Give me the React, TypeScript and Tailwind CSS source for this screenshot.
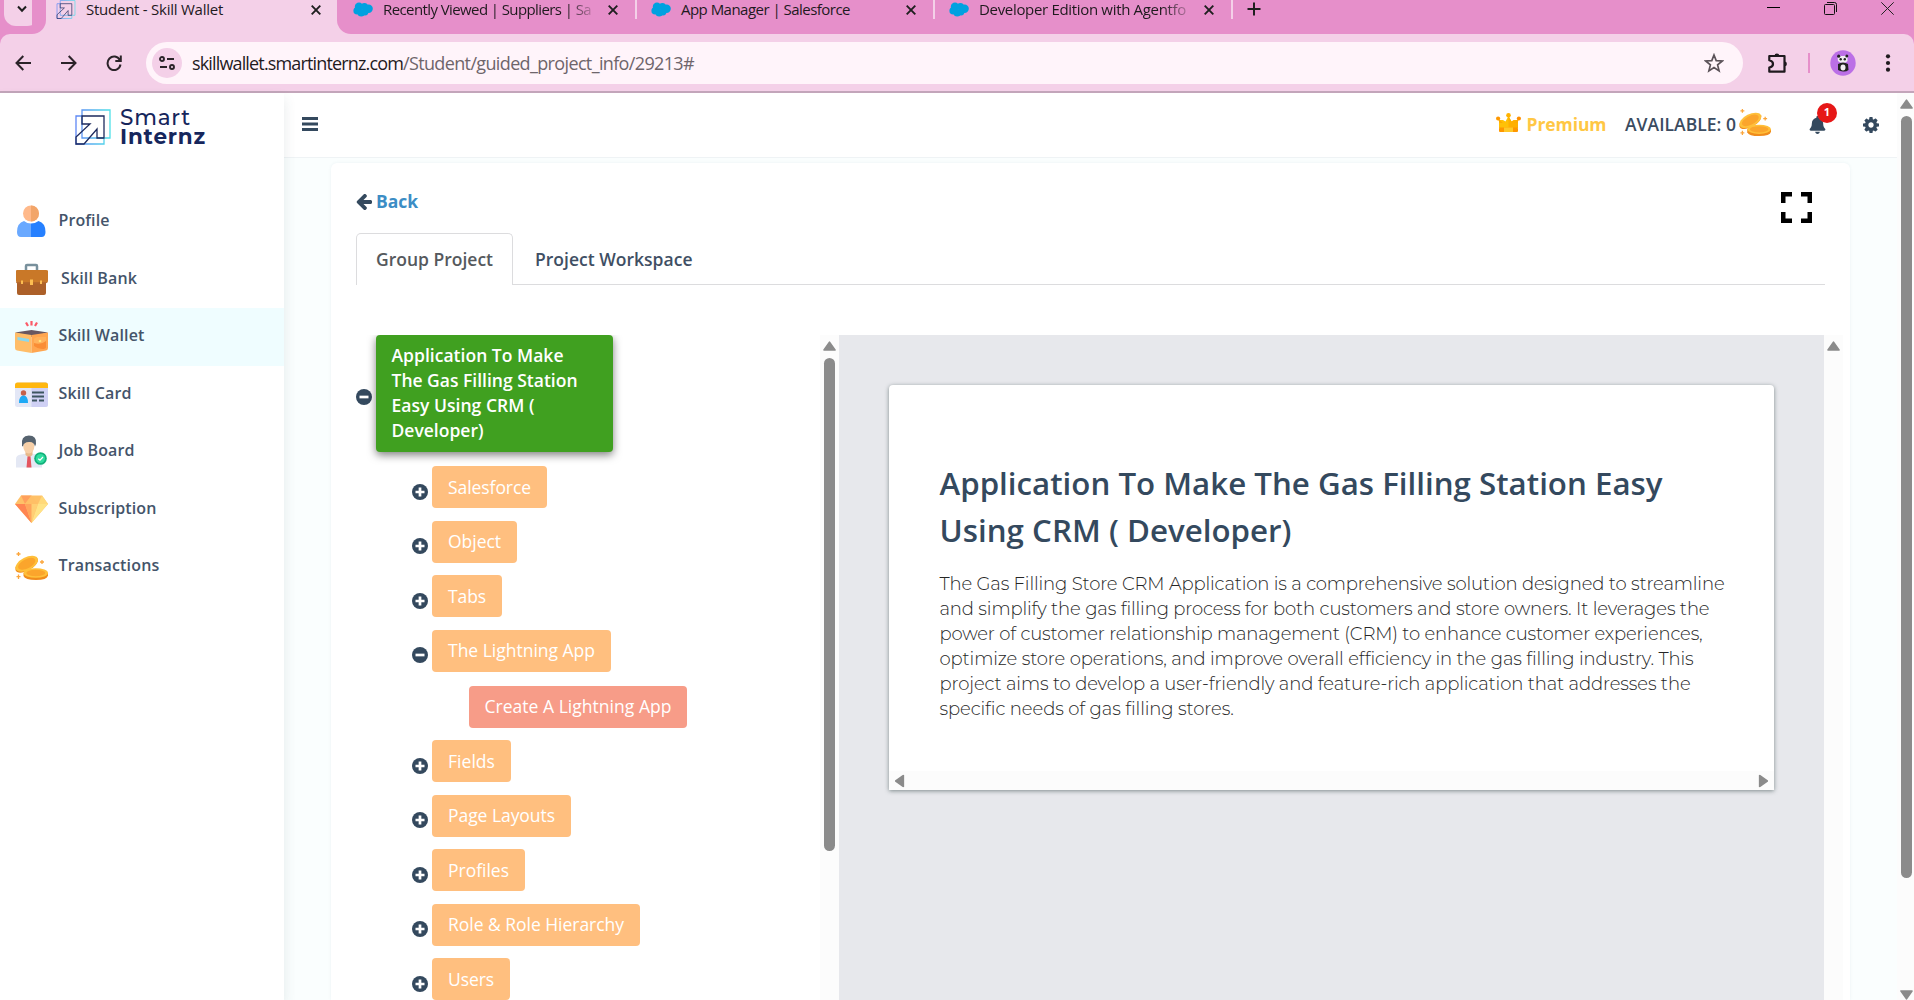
import React, { useLayoutEffect, useRef, useState } from "react";
import { FaBell } from "react-icons/fa";

/** One line of text whose tracking is adjusted so that it spans `width` pixels. */
function FitLine({ width, className = "", children }: { width: number; className?: string; children: string }) {
  const ref = useRef<HTMLSpanElement>(null);
  const [spacing, setSpacing] = useState(0);
  useLayoutEffect(() => {
    if (ref.current) {
      const natural = ref.current.getBoundingClientRect().width;
      setSpacing((width - natural) / children.length);
    }
  }, [width, children]);
  return (
    <span ref={ref} className={`inline-block whitespace-nowrap ${className}`} style={{ letterSpacing: spacing }}>
      {children}
    </span>
  );
}

/* ---------- browser chrome ---------- */

function BrandMark({ className }: { className: string }) {
  return (
    <svg viewBox="0 0 36 36" className={className} fill="none">
      <defs>
        <linearGradient id="brand" x1="0" y1="0" x2="1" y2="0">
          <stop offset="0" stopColor="#5f86f5" />
          <stop offset="1" stopColor="#4fe0e8" />
        </linearGradient>
      </defs>
      <path d="M7 24V1H35V29H30M7 7H1V35H29V29H7V24" stroke="url(#brand)" strokeWidth="1.3" />
      <path d="M7 7H29V29H22V20L9 35H1V28L15 15H7Z" stroke="#1d2a5e" strokeWidth="1.3" />
    </svg>
  );
}

function Cloud() {
  return (
    <svg viewBox="0 0 20 15" className="h-[15px] w-5 shrink-0" fill="#00a1e0">
      <circle cx="6" cy="4.8" r="4.2" />
      <circle cx="11.4" cy="4.6" r="3.6" />
      <circle cx="15.6" cy="6.7" r="4.2" />
      <circle cx="4.2" cy="8.8" r="3.8" />
      <circle cx="8.2" cy="11" r="3.6" />
      <circle cx="12" cy="10" r="3.4" />
    </svg>
  );
}

function Cross() {
  return (
    <svg viewBox="0 0 10 10" className="h-[10px] w-[10px] shrink-0" stroke="#1f1f1f" strokeWidth="1.9">
      <path d="M.7.7 9.3 9.3M9.3.7.7 9.3" />
    </svg>
  );
}

function SalesforceTab({ title, textWidth, fade }: { title: string; textWidth: number; fade: boolean }) {
  return (
    <div className="flex h-[19px] w-[284px] shrink-0 items-center">
      <Cloud />
      <div
        className={`ml-[10px] w-[209px] leading-[19px] ${
          fade ? "[mask-image:linear-gradient(to_right,black_88%,rgba(0,0,0,0.2))]" : ""
        }`}
      >
        <FitLine width={textWidth}>{title}</FitLine>
      </div>
      <div className="ml-[16px] flex">
        <Cross />
      </div>
      <div className="ml-auto h-[19px] w-[2px] bg-[#f4d0e8]" />
    </div>
  );
}

function TabStrip() {
  return (
    <div className="flex h-[34px] bg-[#e68fca] font-['Open_Sans',sans-serif] text-[15px] text-[#1f1a1e]">
      <div className="h-full w-[46px] shrink-0 rounded-br-[14px] bg-[#e68fca]">
        <div className="ml-1 flex h-[26px] w-[35px] items-center justify-center rounded-b-[12px] bg-[#f4d0e8] pb-2">
          <svg viewBox="0 0 10 8" className="h-2 w-[10px]" fill="none" stroke="#1f1f1f" strokeWidth="2">
            <path d="M1 1.5 5 5.7 9 1.5" />
          </svg>
        </div>
      </div>
      <div className="-ml-[14px] w-[319px] shrink-0 bg-[#f4d0e8]">
        <div className="flex h-full">
          <div className="h-full w-[14px] rounded-br-[14px] bg-[#e68fca]" />
          <div className="flex h-[19px] flex-1 items-center pl-[10px]">
            <BrandMark className="h-[19px] w-5" />
            <FitLine width={137} className="ml-[10px] leading-[19px]">
              Student - Skill Wallet
            </FitLine>
            <div className="ml-[88px] flex">
              <Cross />
            </div>
          </div>
          <div className="h-full w-[14px] rounded-bl-[14px] bg-[#e68fca]" />
        </div>
      </div>
      <div className="ml-[2px] flex gap-[14px]">
        <SalesforceTab title="Recently Viewed | Suppliers | Sa" textWidth={208} fade />
        <SalesforceTab title="App Manager | Salesforce" textWidth={169} fade={false} />
        <SalesforceTab title="Developer Edition with Agentfo" textWidth={207} fade />
      </div>
      <svg viewBox="0 0 14 14" className="mt-[2px] ml-[14px] h-[14px] w-[14px]" stroke="#1f1f1f" strokeWidth="2">
        <path d="M7 .5V13.5M.5 7H13.5" />
      </svg>
      <div className="mr-5 ml-auto flex gap-[44px] pt-[2px]">
        <svg viewBox="0 0 13 13" className="h-[13px] w-[13px]" stroke="#000">
          <path d="M0 5.5H13" />
        </svg>
        <svg viewBox="0 0 13 13" className="h-[13px] w-[13px]" stroke="#111" fill="none">
          <rect x=".5" y="2.5" width="10" height="10" rx="1" />
          <path d="M3 .5H10.5Q12.5 .5 12.5 2.500V10" />
        </svg>
        <svg viewBox="0 0 13 13" className="h-[13px] w-[13px]" stroke="#222">
          <path d="M.3.3 12.700 12.700M12.700.3.3 12.700" />
        </svg>
      </div>
    </div>
  );
}

function Toolbar() {
  return (
    <div className="bg-[#e68fca]">
      <div className="flex h-[59px] items-center rounded-t-[10px] border-b-2 border-[#c3a5ba] bg-[#f4d0e8] pl-[15px]">
        <svg viewBox="0 0 16 16" className="h-4 w-4" fill="none" stroke="#2b2329" strokeWidth="2">
          <path d="M16 8H1.500M8.300 1 1.500 8 8.300 15" />
        </svg>
        <svg viewBox="0 0 16 16" className="ml-[30px] h-4 w-4" fill="none" stroke="#2b2329" strokeWidth="2">
          <path d="M0 8H14.500M7.700 1 14.500 8 7.700 15" />
        </svg>
        <svg viewBox="0 0 16 16" className="ml-[28.500px] h-4 w-4" fill="none" stroke="#2b2329" strokeWidth="2">
          <path d="M13.800 5A6.500 6.800 0 1 0 14.500 9.500M14.800.5V6H9.300" />
        </svg>
        <div className="ml-[24.500px] flex h-[42px] w-[1597px] items-center rounded-full bg-[#fff4fa] pl-[6px]">
          <div className="flex h-[30px] w-[30px] items-center justify-center rounded-full bg-[#f4d0e8]">
            <svg viewBox="0 0 16 14" className="h-[14px] w-4" fill="none" stroke="#2b2329" strokeWidth="1.900">
              <circle cx="3" cy="3" r="2" />
              <path d="M8 3H15M1 11H8" />
              <circle cx="13" cy="11" r="2" />
            </svg>
          </div>
          <div className="ml-[10px] flex font-['Open_Sans',sans-serif] text-[18px] leading-6">
            <FitLine width={211} className="text-[#1f1a1e]">
              skillwallet.smartinternz.com
            </FitLine>
            <FitLine width={291} className="text-[#6e656b]">
              /Student/guided_project_info/29213#
            </FitLine>
          </div>
          <svg viewBox="0 0 20 20" className="mr-[19px] ml-auto h-5 w-5" fill="none" stroke="#5b5258" strokeWidth="1.700">
            <path d="M10 2 12.200 7.600 18.300 8 13.600 11.900 15.100 17.900 10 14.600 4.900 17.900 6.400 11.900 1.700 8 7.800 7.600Z" />
          </svg>
        </div>
        <svg viewBox="0 0 22 22" className="ml-6 h-[22px] w-[22px]" fill="none" stroke="#1f1a1e" strokeWidth="2.200">
          <path d="M2.300 4H17.500V19.700H2.300V15.500Q6 14.800 6 12T2.300 8.300Z" strokeLinejoin="round" />
          <path d="M7.500 4a2.400 2.400 0 0 1 4.800 0ZM17.500 9.500a2.400 2.400 0 0 1 0 4.800Z" fill="#1f1a1e" stroke="none" />
        </svg>
        <div className="ml-[19px] h-5 w-[2px] bg-[#e68fca]" />
        <svg viewBox="0 0 26 26" className="ml-5 h-[26px] w-[26px]">
          <circle cx="13" cy="13" r="12.700" fill="#bb6fe6" />
          <path d="M8 11Q7 5 9 5.500L11 6H14L17 5Q18 5 17.500 8V11Q16 13 13 13T8 11Z" fill="#f2eef4" />
          <circle cx="8.700" cy="6.200" r="1.600" fill="#222" />
          <circle cx="16.800" cy="6" r="1.500" fill="#222" />
          <circle cx="10.700" cy="9.300" r="1.200" fill="#222" />
          <circle cx="14.800" cy="9.300" r="1.200" fill="#222" />
          <path d="M8 14Q13 11 18 14L18.500 20Q16 22 13 21.500T8 20Z" fill="#222" />
          <ellipse cx="13" cy="17.500" rx="2.500" ry="3" fill="#f2eef4" />
        </svg>
        <svg viewBox="0 0 6 20" className="ml-[29px] h-5 w-[6px]" fill="#1f1a1e">
          <circle cx="3" cy="3.300" r="2.100" />
          <circle cx="3" cy="10" r="2.100" />
          <circle cx="3" cy="16.700" r="2.100" />
        </svg>
      </div>
    </div>
  );
}

/* ---------- scrollbars ---------- */

function ScrollArrow({ className = "" }: { className?: string }) {
  return (
    <svg viewBox="0 0 13 10" className={`h-[10px] w-[13px] shrink-0 ${className}`}>
      <path d="M6.500 1.200 12 9H1Z" fill="#8b8b8b" stroke="#8b8b8b" strokeWidth="1.600" strokeLinejoin="round" />
    </svg>
  );
}

/* ---------- illustrations ---------- */

const art = "h-[33px] w-[33px] shrink-0";

function ProfileArt() {
  return (
    <svg viewBox="0 0 33 33" className={art}>
      <circle cx="16" cy="8.500" r="8" fill="#ffb98a" />
      <path d="M16 .5a8 8 0 0 1 0 16Z" fill="#f2a569" />
      <path d="M9 16Q12 18.500 16 18.500V32H6Q2 32 2 27 2 18 9 16Z" fill="#6aa9ff" />
      <path d="M23.500 16Q20 18.500 16 18.500V32H26.500Q30.500 32 30.500 27 30.500 18 23.500 16Z" fill="#2680ff" />
    </svg>
  );
}

function BriefcaseArt() {
  return (
    <svg viewBox="0 0 33 33" className={art}>
      <path d="M11 7V3Q11 2 12 2H21Q22 2 22 3V7" fill="none" stroke="#78909c" strokeWidth="2.500" />
      <path d="M2 17H31V30Q31 32 29 32H4Q2 32 2 30Z" fill="#ac6029" />
      <path d="M1 8Q1 7 2 7H31Q33 7 33 8V18Q33 20 31 20H3Q1 20 1 18Z" fill="#c97828" />
      <path d="M1 19H32L31 20.500H2Z" fill="#b4672a" />
      <path d="M15 16.500h3v5.500h-3zM6 17.500h2v3.500h-2zM25 17.500h2v3.500h-2z" fill="#fcbd52" />
    </svg>
  );
}

function WalletArt() {
  return (
    <svg viewBox="0 0 33 33" className={art}>
      <path d="M11 2.500 13 6M16.500 1V5.500M22 2.500 20 6" stroke="#fb5a68" strokeWidth="2.200" />
      <path d="M0 12.500 16.500 10 33 12.500 16.500 17Z" fill="#685760" />
      <path d="M0 12.500 16.500 15V33L2 30.500Q0 30 0 28Z" fill="#ffbd68" />
      <path d="M33 12.500 16.500 15V33L31 30.500Q33 30 33 28Z" fill="#ffa650" />
      <path d="M2.500 17 14 19V22L2.500 20Z" fill="#8ad8ee" />
      <path d="M19 20Q19 17 22 17H31V27Q31 29 27 29T19 26Z" fill="#fa8d35" />
      <path d="M19 19Q19 17 22 17H31V21Q26 25 19 23Z" fill="#ffb25c" />
      <circle cx="25" cy="21" r="1.300" fill="#ffe27a" />
    </svg>
  );
}

function CardArt() {
  return (
    <svg viewBox="0 0 33 33" className={art}>
      <rect y="4.500" width="33" height="24.500" rx="2.500" fill="#e3e7f6" />
      <path d="M16.500 4.500H30.500Q33 4.500 33 7V26.500Q33 29 30.500 29H16.500Z" fill="#cfd0f4" />
      <path d="M0 10V7Q0 4.500 2.500 4.500H30.500Q33 4.500 33 7V10Z" fill="#ffb70f" />
      <circle cx="8.500" cy="15" r="2.700" fill="#c4604a" />
      <path d="M4 25Q4 17.500 8.500 17.500T13 25Z" fill="#1da9f5" />
      <path d="M17 14.500H29M17 18.500H29M17 22.500H22M24 22.500H29" stroke="#3d5560" strokeWidth="1.900" />
    </svg>
  );
}

function JobArt() {
  return (
    <svg viewBox="0 0 33 33" className={art}>
      <path d="M1 32.500V24Q1 20 6 19.500L14 18 22 19.500Q27 20 27 25V32.500Z" fill="#e4e8f4" />
      <path d="M10.500 14H17.500V20L14 22.500 10.500 20Z" fill="#e8b98a" />
      <ellipse cx="13.800" cy="11.500" rx="5.500" ry="7" fill="#f7d0a8" />
      <path d="M7 11Q5.500 .5 13.800 .5T21 9L20 11.500Q19 6.500 14 7 8.500 7 8 11.500Z" fill="#56636f" />
      <path d="M12.500 21.500H15.500L16.500 32.500H11.500Z" fill="#e4555f" />
      <circle cx="25.500" cy="23.500" r="6.300" fill="#12b07a" />
      <circle cx="25.500" cy="23.500" r="4.500" fill="#30dda0" />
      <path d="M23.300 23.700 25 25.200 28 22" stroke="#fff" strokeWidth="1.200" fill="none" />
    </svg>
  );
}

function GemArt() {
  return (
    <svg viewBox="0 0 33 33" className={art}>
      <path d="M6 2.500H27L33 11 16.500 30 0 11Z" fill="#ffc168" />
      <path d="M0 11H10L16.500 30Z" fill="#ff8552" />
      <path d="M10 11H23L16.500 30Z" fill="#ffa55c" />
      <path d="M16.500 11H23L16.500 30Z" fill="#ffcf74" />
      <path d="M23 11H33L16.500 30Z" fill="#ffe386" />
      <path d="M6 2.500 10 11 16.500 2.500Z" fill="#ffa05c" />
      <path d="M16.500 2.500 10 11H23Z" fill="#ffbf66" />
      <path d="M27 2.500 23 11H33Z" fill="#ffd97a" />
    </svg>
  );
}

function CoinsArt({ className = art }: { className?: string }) {
  return (
    <svg viewBox="0 0 33 33" className={className}>
      <path d="M.5 17V20Q2 24 9.500 22L18 17.500Q23.500 13 23 8.500Z" fill="#ee8a1b" />
      <ellipse cx="11.700" cy="13.800" rx="12.200" ry="6.400" transform="rotate(-27 11.700 13.800)" fill="#ffc03a" />
      <ellipse cx="11.700" cy="13.800" rx="9.500" ry="4.600" transform="rotate(-27 11.700 13.800)" fill="#fba52c" />
      <path d="M8.500 23V26Q10 30 21 30T33 25.500V23Z" fill="#f08c1c" />
      <ellipse cx="20.800" cy="23" rx="12.200" ry="4.800" fill="#ffc03a" />
      <ellipse cx="20.800" cy="23" rx="9.500" ry="3.200" fill="#fba52c" />
      <path d="M3.500 2V6M1.500 4H5.500M27 10V14M25 12H29M3.500 24.500V29M1.500 26.700H5.500" stroke="#fba63c" strokeWidth="1.300" />
    </svg>
  );
}

function CrownArt() {
  return (
    <svg viewBox="0 0 25 20" className="h-5 w-[25px]">
      <path d="M3 7H7L9.500 8.500 12.500 3 15.500 8.500 18 7H22V15H3Z" fill="#ffc107" />
      <path d="M12.500 3 15.500 8.500 18 7H22V15H12.500Z" fill="#ffb000" />
      <path d="M2 5.500 7 10H3.500ZM23 5.500 18 10H21.500Z" fill="#ffab00" />
      <rect x="3" y="14.500" width="19" height="4.500" rx="1" fill="#ff9800" />
      <rect x="8" y="14.500" width="9" height="4.500" fill="#ffc928" />
      <circle cx="2.100" cy="5.500" r="2.100" fill="#ff9800" />
      <circle cx="12.500" cy="2.300" r="2.300" fill="#ffb300" />
      <circle cx="22.900" cy="5.500" r="2.100" fill="#ff8f00" />
    </svg>
  );
}

/* ---------- page ---------- */

function Sidebar() {
  const items = [
    { label: "Profile", icon: <ProfileArt />, width: 51 },
    { label: "Skill Bank", icon: <BriefcaseArt />, width: 76, shift: true },
    { label: "Skill Wallet", icon: <WalletArt />, width: 86, active: true },
    { label: "Skill Card", icon: <CardArt />, width: 73 },
    { label: "Job Board", icon: <JobArt />, width: 76 },
    { label: "Subscription", icon: <GemArt />, width: 98 },
    { label: "Transactions", icon: <CoinsArt />, width: 101 },
  ];
  return (
    <aside className="z-10 w-[284px] shrink-0 bg-white shadow-[0_6px_12px_rgba(60,80,90,0.12)]">
      <div className="flex h-[100px] gap-[9px] pt-4 pl-[75px]">
        <BrandMark className="h-9 w-9" />
        <div className="-mt-[1px] flex flex-col font-['Montserrat','Inter',sans-serif] text-[21.500px] leading-[19px] text-[#16265c]">
          <FitLine width={71} className="self-start font-medium">Smart</FitLine>
          <FitLine width={86} className="self-start font-bold">Internz</FitLine>
        </div>
      </div>
      <nav>
        {items.map((it) => (
          <div key={it.label} className={`flex h-[57.500px] items-center pl-[15px] ${it.active ? "bg-[#effdff]" : ""}`}>
            {it.icon}
            <div className={`pb-[3px] text-[16px] font-semibold text-[#44546a] ${it.shift ? "ml-[13px]" : "ml-[10.500px]"}`}>
              <FitLine width={it.width}>{it.label}</FitLine>
            </div>
          </div>
        ))}
      </nav>
    </aside>
  );
}

function Header() {
  return (
    <header className="flex h-[65px] shrink-0 items-center border-b border-[#eff3f5] bg-white pl-[18px] text-[17.500px]">
      <svg viewBox="0 0 16 14" className="-mt-[3px] h-[14px] w-4" fill="#34495e">
        <path d="M0 0H16V3H0ZM0 5.500H16V8.500H0ZM0 11H16V14H0Z" />
      </svg>
      <div className="mr-[18px] ml-auto flex items-center pb-[1px]">
        <div className="-mt-[4px] flex">
          <CrownArt />
        </div>
        <FitLine width={80} className="ml-[5.500px] font-bold text-[#ffc744]">Premium</FitLine>
        <FitLine width={111} className="ml-[18.500px] font-semibold text-[#3a4b60]">AVAILABLE: 0</FitLine>
        <CoinsArt className="-mt-[3px] ml-[3px] h-8 w-8" />
        <div className="relative ml-[38px]">
          <FaBell className="h-[18px] w-[17px] text-[#34495e]" />
          <span className="absolute -top-[13px] left-[8px] flex h-5 w-5 items-center justify-center rounded-full bg-[#e61717] text-[11px] font-bold text-white">
            1
          </span>
        </div>
        <svg viewBox="128 128 1536 1536" className="ml-[37px] h-4 w-4" fill="#34495e">
          <path d="M1152 896q0-106-75-181t-181-75-181 75-75 181 75 181 181 75 181-75 75-181zm512-109v222q0 12-8 23t-20 13l-185 28q-19 54-39 91 35 50 107 138 10 12 10 25t-9 23q-27 37-99 108t-94 71q-12 0-26-9l-138-108q-44 23-91 38-16 136-29 186-7 28-36 28h-222q-14 0-24.500-8.500t-11.500-21.500l-28-184q-49-16-90-37l-141 107q-10 9-25 9-14 0-25-11-126-114-165-168-7-10-7-23 0-12 8-23 15-21 51-66.500t54-70.500q-27-50-41-99l-183-27q-13-2-21-12.500t-8-23.500v-222q0-12 8-23t19-13l186-28q14-46 39-92-40-57-107-138-10-12-10-24 0-10 9-23 26-36 98.500-107.500t94.500-71.500q13 0 26 10l138 107q44-23 91-38 16-136 29-186 7-28 36-28h222q14 0 24.500 8.500t11.500 21.500l28 184q49 16 90 37l142-107q9-9 24-9 13 0 25 10 129 119 165 170 7 8 7 22 0 12-8 23-15 21-51 66.500t-54 70.500q26 50 41 98l183 28q13 2 21 12.500t8 23.500z" />
        </svg>
      </div>
    </header>
  );
}

function Toggle({ open }: { open: boolean }) {
  return (
    <svg viewBox="0 0 16 16" className="h-4 w-4 shrink-0">
      <circle cx="8" cy="8" r="8" fill="#34495e" />
      <path d={open ? "M3.500 8H12.500" : "M3.500 8H12.500M8 3.500V12.500"} stroke="#fff" strokeWidth="2.700" />
    </svg>
  );
}

function TreeNode({ label, width, open = false }: { label: string; width: number; open?: boolean }) {
  return (
    <div className="flex h-[42px] pl-14">
      <div className="mt-[17.600px] mr-1">
        <Toggle open={open} />
      </div>
      <div className="rounded-[4px] bg-[#ffbf7f] px-4 pt-[8.700px] leading-[25px] text-white">
        <FitLine width={width - 32}>{label}</FitLine>
      </div>
    </div>
  );
}

function Tree() {
  return (
    <div className="flex h-full w-[483px] shrink-0 overflow-hidden">
      <div className="flex-1 text-[17.500px]">
        <div className="flex h-[117px]">
          <div className="mt-[54px] mr-1">
            <Toggle open />
          </div>
          <div className="flex w-[237px] flex-col items-start rounded-[4px] bg-[#40a020] pt-[8px] pl-[15.500px] leading-[25px] font-semibold text-white shadow-[0_3px_8px_rgba(0,0,0,0.5)]">
            <FitLine width={172}>Application To Make</FitLine>
            <FitLine width={186}>The Gas Filling Station</FitLine>
            <FitLine width={143}>Easy Using CRM (</FitLine>
            <FitLine width={92}>Developer)</FitLine>
          </div>
        </div>
        <div className="mt-[14px] flex flex-col gap-[12.500px]">
          <TreeNode label="Salesforce" width={115} />
          <TreeNode label="Object" width={85} />
          <TreeNode label="Tabs" width={70} />
          <TreeNode label="The Lightning App" width={179} open />
        </div>
        <div className="mt-[14.500px] mb-3 flex h-[42px] pl-[113px]">
          <div className="w-[218px] rounded-[4px] bg-[#f79c88] pt-[8px] pl-[15.500px] leading-[25px] text-white">
            <FitLine width={187}>Create A Lightning App</FitLine>
          </div>
        </div>
        <div className="flex flex-col gap-[12.500px]">
          <TreeNode label="Fields" width={79} />
          <TreeNode label="Page Layouts" width={139} />
          <TreeNode label="Profiles" width={93} />
          <TreeNode label="Role & Role Hierarchy" width={208} />
          <TreeNode label="Users" width={78} />
        </div>
      </div>
      <div className="flex w-[19px] flex-col items-center bg-[#fcfcfc] pt-[6px]">
        <ScrollArrow />
        <div className="mt-[7px] h-[493px] w-[11px] rounded-full bg-[#8b8b8b]" />
      </div>
    </div>
  );
}

function Article() {
  const lines: [string, number][] = [
    ["The Gas Filling Store CRM Application is a comprehensive solution designed to streamline", 785],
    ["and simplify the gas filling process for both customers and store owners. It leverages the", 770],
    ["power of customer relationship management (CRM) to enhance customer experiences,", 763],
    ["optimize store operations, and improve overall efficiency in the gas filling industry. This", 754],
    ["project aims to develop a user-friendly and feature-rich application that addresses the", 751],
    ["specific needs of gas filling stores.", 294],
  ];
  return (
    <div className="flex flex-1 overflow-hidden">
      <div className="flex-1 bg-[#e7e8ec] pt-[50px] pl-[50px]">
        <div className="flex h-[405px] w-[885px] flex-col rounded-t-[4px] bg-white shadow-[0_1px_4px_rgba(40,60,60,0.55)]">
          <div className="flex-1 pt-[75px] pl-[50.500px]">
            <h1 className="flex flex-col items-start text-[31.250px] leading-[47px] font-semibold text-[#34495e]">
              <FitLine width={723}>Application To Make The Gas Filling Station Easy</FitLine>
              <FitLine width={352}>Using CRM ( Developer)</FitLine>
            </h1>
            <p className="mt-[18px] flex flex-col items-start font-['Montserrat','Inter',sans-serif] text-[18px] leading-[25px] font-[350] text-[#262626]">
              {lines.map(([text, w]) => (
                <FitLine key={text} width={w}>
                  {text}
                </FitLine>
              ))}
            </p>
          </div>
          <div className="flex h-[19px] items-center justify-between bg-[#fcfcfc] px-1">
            <ScrollArrow className="-rotate-90" />
            <ScrollArrow className="rotate-90" />
          </div>
        </div>
      </div>
      <div className="flex w-[19px] justify-center bg-[#fcfcfc] pt-[6px]">
        <ScrollArrow />
      </div>
    </div>
  );
}

function Panel() {
  return (
    <main className="ml-[47px] flex w-[1519px] flex-none flex-col overflow-hidden rounded-t-[6px] bg-white shadow-[0_0_3px_rgba(120,160,170,0.12)]">
      <div className="flex h-[70px] shrink-0 justify-between pr-[38px] pl-[25px]">
        <div className="flex h-[76px] items-center gap-1 text-[17.500px]">
          <svg viewBox="128 192 1536 1536" className="mt-[2px] h-4 w-4" fill="#34495e">
            <path d="M1664 896v128q0 53-32.500 90.500t-84.500 37.500h-704l293 294q38 36 38 90t-38 90l-75 76q-37 37-90 37-52 0-91-37l-651-652q-37-37-37-90 0-52 37-91l651-650q38-38 91-38 52 0 90 38l75 74q38 38 38 91t-38 91l-293 293h704q52 0 84.500 37.500t32.500 90.500z" />
          </svg>
          <FitLine width={42} className="font-bold text-[#3c8dc5]">Back</FitLine>
        </div>
        <svg viewBox="0 0 31 31" className="mt-[29px] h-[31px] w-[31px]" fill="none" stroke="#000" strokeWidth="4.500">
          <path d="M11 2.250H2.250V11M20 2.250H28.750V11M11 28.750H2.250V20M20 28.750H28.750V20" />
        </svg>
      </div>
      <div className="ml-[25px] flex h-[52px] w-[1469px] shrink-0 border-b border-[#dcdcde] text-[17.500px] font-semibold">
        <div className="flex h-[52px] w-[157px] items-center justify-center rounded-t-[5px] border border-b-0 border-[#dcdcde] bg-white text-[#55595d]">
          <FitLine width={117}>Group Project</FitLine>
        </div>
        <div className="ml-[22px] flex h-[52px] items-center text-[#3f4f64]">
          <FitLine width={157.5}>Project Workspace</FitLine>
        </div>
      </div>
      <div className="mt-[50px] flex min-h-0 flex-1 pr-[7px] pl-[25px]">
        <Tree />
        <Article />
      </div>
    </main>
  );
}

export default function App() {
  return (
    <div className="flex h-[1000px] w-[1914px] flex-col overflow-hidden bg-white font-['Open_Sans',sans-serif]">
      <TabStrip />
      <Toolbar />
      <div className="flex min-h-0 flex-1">
        <Sidebar />
        <div className="flex min-w-0 flex-1 flex-col bg-[#fafefe]">
          <Header />
          <div className="flex min-h-0 flex-1 pt-[5px]">
            <Panel />
          </div>
        </div>
        <div className="flex w-[17px] shrink-0 flex-col items-center bg-[#fcfcfc] pt-[6px] pr-[2px] pl-1">
          <ScrollArrow />
          <div className="mt-[7px] h-[762px] w-[11px] shrink-0 rounded-full bg-[#8b8b8b]" />
          <ScrollArrow className="mt-auto rotate-180" />
        </div>
      </div>
    </div>
  );
}
